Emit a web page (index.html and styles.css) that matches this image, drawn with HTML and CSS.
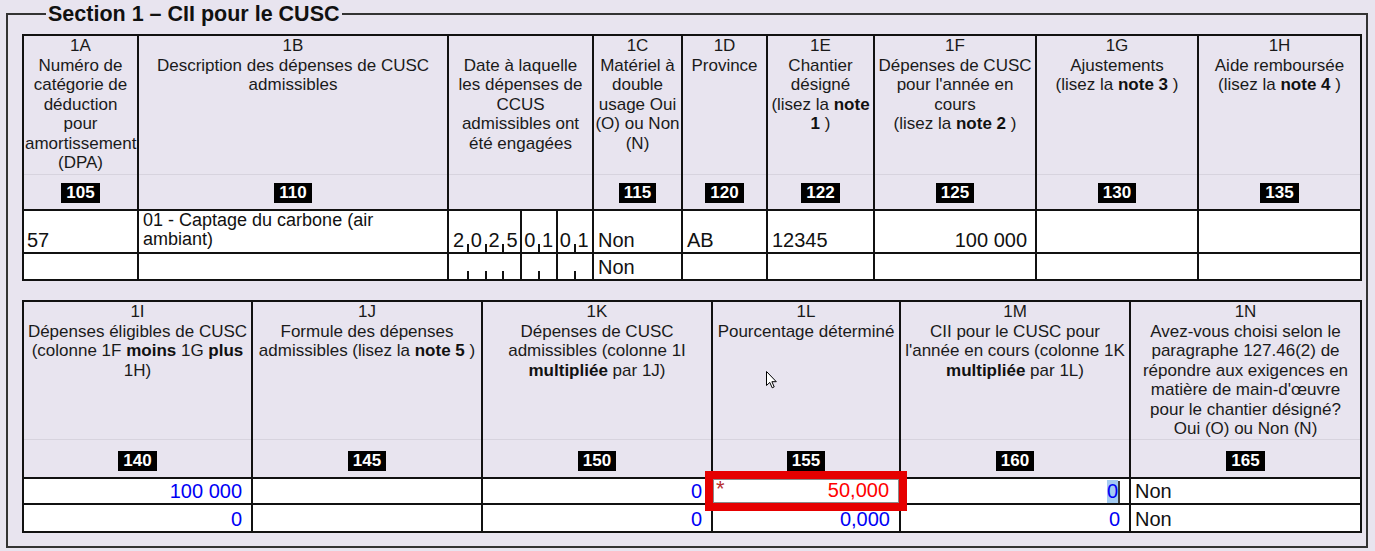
FILE: index.html
```html
<!DOCTYPE html>
<html lang="fr">
<head>
<meta charset="utf-8">
<title>Section 1 – CII pour le CUSC</title>
<link rel="stylesheet" href="styles.css">
</head>
<body>
<fieldset class="section">
  <legend class="section-title">Section 1 – CII pour le CUSC</legend>

  <table class="grid grid-top">
    <colgroup>
      <col class="w115"><col class="w310"><col class="w145"><col class="w89"><col class="w85"><col class="w107"><col class="w162"><col class="w162"><col class="w163">
    </colgroup>
    <thead>
      <tr class="desc-row">
        <th>1A<br>Numéro de catégorie de déduction pour amortissement (DPA)</th>
        <th>1B<br>Description des dépenses de CUSC admissibles</th>
        <th><br>Date à laquelle<br>les dépenses de<br>CCUS<br>admissibles ont<br>été engagées</th>
        <th>1C<br>Matériel à double usage Oui (O) ou Non (N)</th>
        <th>1D<br>Province</th>
        <th>1E<br>Chantier désigné<br>(lisez la <b>note 1</b> )</th>
        <th>1F<br>Dépenses de CUSC pour l'année en cours<br>(lisez la <b>note 2</b> )</th>
        <th>1G<br>Ajustements<br>(lisez la <b>note 3</b> )</th>
        <th>1H<br>Aide remboursée<br>(lisez la <b>note 4</b> )</th>
      </tr>
      <tr class="code-row">
        <th><span class="code">105</span></th>
        <th><span class="code">110</span></th>
        <th></th>
        <th><span class="code">115</span></th>
        <th><span class="code">120</span></th>
        <th><span class="code">122</span></th>
        <th><span class="code">125</span></th>
        <th><span class="code">130</span></th>
        <th><span class="code">135</span></th>
      </tr>
    </thead>
    <tbody>
      <tr class="row-tall">
        <td><div class="cell pad3">57</div></td>
        <td><div class="memo">01 - Captage du carbone (air ambiant)</div></td>
        <td>
          <div class="date">
            <span class="d t">2</span><span class="d t">0</span><span class="d t">2</span><span class="d g">5</span><span class="d t">0</span><span class="d g">1</span><span class="d t">0</span><span class="d last">1</span>
          </div>
        </td>
        <td><div class="cell">Non</div></td>
        <td><div class="cell">AB</div></td>
        <td><div class="cell">12345</div></td>
        <td><div class="cell right">100 000</div></td>
        <td><div class="cell"></div></td>
        <td><div class="cell"></div></td>
      </tr>
      <tr>
        <td><div class="cell"></div></td>
        <td><div class="cell"></div></td>
        <td>
          <div class="date">
            <span class="d t"></span><span class="d t"></span><span class="d t"></span><span class="d g"></span><span class="d t"></span><span class="d g"></span><span class="d t"></span><span class="d last"></span>
          </div>
        </td>
        <td><div class="cell">Non</div></td>
        <td><div class="cell"></div></td>
        <td><div class="cell"></div></td>
        <td><div class="cell"></div></td>
        <td><div class="cell"></div></td>
        <td><div class="cell"></div></td>
      </tr>
    </tbody>
  </table>

  <table class="grid grid-bottom">
    <colgroup>
      <col class="w229"><col class="w230"><col class="w230"><col class="w188"><col class="w230"><col class="w231">
    </colgroup>
    <thead>
      <tr class="desc-row">
        <th>1I<br>Dépenses éligibles de CUSC (colonne 1F <b>moins</b> 1G <b>plus</b> 1H)</th>
        <th>1J<br>Formule des dépenses admissibles (lisez la <b>note 5</b> )</th>
        <th>1K<br>Dépenses de CUSC admissibles (colonne 1I <b>multipliée</b> par 1J)</th>
        <th>1L<br>Pourcentage déterminé</th>
        <th>1M<br>CII pour le CUSC pour l'année en cours (colonne 1K <b>multipliée</b> par 1L)</th>
        <th>1N<br>Avez-vous choisi selon le paragraphe 127.46(2) de répondre aux exigences en matière de main-d'œuvre pour le chantier désigné?<br>Oui (O) ou Non (N)</th>
      </tr>
      <tr class="code-row">
        <th><span class="code">140</span></th>
        <th><span class="code">145</span></th>
        <th><span class="code">150</span></th>
        <th><span class="code">155</span></th>
        <th><span class="code">160</span></th>
        <th><span class="code">165</span></th>
      </tr>
    </thead>
    <tbody>
      <tr>
        <td><div class="cell num">100 000</div></td>
        <td><div class="cell"></div></td>
        <td><div class="cell num">0</div></td>
        <td><div class="cell num field-error"><span class="req">*</span>50,000</div></td>
        <td><div class="cell num"><span class="sel">0</span><span class="caret"></span></div></td>
        <td><div class="cell">Non</div></td>
      </tr>
      <tr class="row-last">
        <td><div class="cell num">0</div></td>
        <td><div class="cell"></div></td>
        <td><div class="cell num">0</div></td>
        <td><div class="cell num">0,000</div></td>
        <td><div class="cell num">0</div></td>
        <td><div class="cell">Non</div></td>
      </tr>
    </tbody>
  </table>
</fieldset>

<svg class="pointer" width="12" height="18" viewBox="0 0 12 18" aria-hidden="true">
  <path d="M0.5 0.5 L0.5 14.5 L3.8 11.4 L6.2 16.8 L8.2 15.9 L5.9 10.7 L10.3 10.7 Z" fill="#fff" stroke="#000" stroke-width="1" stroke-linejoin="miter"/>
</svg>
</body>
</html>
```

FILE: styles.css
```css
* { box-sizing: border-box; }

body {
  margin: 0;
  background: #e8e4ef;
  font-family: "Liberation Sans", Arial, sans-serif;
  color: #1a1a1a;
}

.section {
  margin: 2px 7px 0 6px;
  padding: 0 5px 13px 14px;
  border: 2px solid #333;
  min-width: 0;
}

.section-title {
  margin-left: 24px;
  padding: 0 2px;
  font-size: 21.5px;
  font-weight: bold;
  line-height: 24px;
  color: #111;
}

.grid {
  width: 100%;
  border-collapse: collapse;
  table-layout: fixed;
  margin-top: 8px;
}

.grid-bottom { margin-top: 19px; }

.w115 { width: 115px; }
.w310 { width: 310px; }
.w145 { width: 145px; }
.w89 { width: 89px; }
.w85 { width: 85px; }
.w107 { width: 107px; }
.w162 { width: 162px; }
.w163 { width: 163px; }
.w229 { width: 229px; }
.w230 { width: 230px; }
.w231 { width: 231px; }
.w188 { width: 188px; }

.grid th,
.grid td {
  border: 2px solid #111;
  padding: 0;
}

.grid th {
  font-weight: normal;
  font-size: 17px;
  line-height: 19.5px;
  vertical-align: top;
  text-align: center;
  padding: 0 1px;
  color: #1a1a1a;
}

.grid th b { font-weight: bold; color: #111; }

.desc-row th { border-bottom: 1px solid #d7d3de; }

.grid-top .desc-row th { padding-bottom: 1.5px; }

.code-row th {
  border-top: 1px solid #d7d3de;
  padding: 8px 0 6px;
  vertical-align: bottom;
}

.grid-bottom .code-row th { padding-top: 11px; }

.code {
  display: block;
  width: fit-content;
  margin: 0 auto;
  background: #000;
  color: #fff;
  font-weight: bold;
  font-size: 17px;
  line-height: 20px;
  padding: 0 5px;
}

.grid td {
  background: #fff;
  font-size: 20px;
  vertical-align: bottom;
  color: #111;
}

.cell {
  display: flex;
  align-items: flex-end;
  height: 24px;
  padding: 0 4px;
  white-space: nowrap;
  line-height: 23px;
}

.row-last .cell { height: 26px; }

.grid-top .cell { height: 25px; }

.grid-top .row-tall .cell { height: 41px; }

.pad3 { padding-left: 3px; }

.right {
  justify-content: flex-end;
  padding-right: 8px;
}

.num {
  justify-content: flex-end;
  padding-right: 9px;
  color: #0000f5;
}

.memo {
  height: 41px;
  padding: 0 4px;
  font-size: 18px;
  line-height: 19px;
}

.date {
  display: flex;
  height: 25px;
  padding-left: 2px;
}

.row-tall .date { height: 41px; }

.d {
  flex: none;
  width: 17.8px;
  display: flex;
  align-items: flex-end;
  padding-left: 2px;
  line-height: 23px;
}

.d.last { flex: 1 1 auto; width: auto; }

.t {
  background: linear-gradient(#111, #111) no-repeat right bottom / 2px 8px;
}

.g { border-right: 2px solid #111; }

.field-error {
  position: relative;
  border: 1px solid #8a8a8a;
  outline: 8px solid #e60000;
  color: #ff0000;
}

.req {
  position: absolute;
  left: 2px;
  top: -2px;
  font-size: 22px;
  line-height: 22px;
  color: #b83030;
}

.sel { background: #a4cbf2; }

.caret {
  align-self: flex-end;
  width: 2px;
  height: 22px;
  background: #3c3c3c;
}

.pointer {
  position: absolute;
  left: 766px;
  top: 371px;
}
```
